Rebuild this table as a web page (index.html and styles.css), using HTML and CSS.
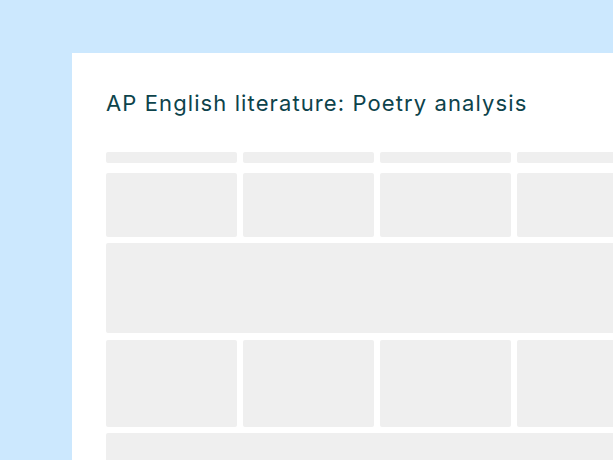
FILE: index.html
```html
<!DOCTYPE html>
<html>
<head>
<meta charset="utf-8">
<link rel="stylesheet" href="styles.css">
</head>
<body>
<div class="card">
  <h1 class="title">AP English literature: Poetry analysis</h1>
  <div class="heads">
    <div class="cell head"></div><div class="cell head"></div><div class="cell head"></div><div class="cell head"></div>
  </div>
  <div class="grid">
    <div class="cell"></div><div class="cell"></div><div class="cell"></div><div class="cell"></div>
    <div class="cell wide"></div>
    <div class="cell"></div><div class="cell"></div><div class="cell"></div><div class="cell"></div>
    <div class="cell wide"></div>
  </div>
</div>
</body>
</html>
```
FILE: styles.css
```css
html, body {
  margin: 0;
  padding: 0;
  background: #cce8fe;
  overflow: hidden;
  height: 460px;
  width: 613px;
}
.card {
  margin: 53px 0 0 72px;
  background: #ffffff;
  width: 620px;
  height: 420px;
  padding: 0 0 0 34px;
  box-sizing: border-box;
  overflow: hidden;
}
.title {
  margin: 0;
  padding-top: 36px;
  font-family: "Inter", sans-serif;
  font-weight: 400;
  font-size: 22px;
  letter-spacing: 1.1px;
  line-height: 28px;
  color: #0d434b;
  white-space: nowrap;
}
.heads {
  margin-top: 35px;
  display: grid;
  grid-template-columns: 131px 131px 131px 131px;
  column-gap: 6px;
  height: 10.7px;
  margin-bottom: 10.3px;
}
.grid {
  display: grid;
  grid-template-columns: 131px 131px 131px 131px;
  grid-template-rows: 63.7px 90.3px 86.7px 40px;
  column-gap: 6px;
  row-gap: 6.5px;
}
.cell {
  background: #efefef;
  border-radius: 2px;
}
.wide {
  grid-column: 1 / span 4;
}
```
